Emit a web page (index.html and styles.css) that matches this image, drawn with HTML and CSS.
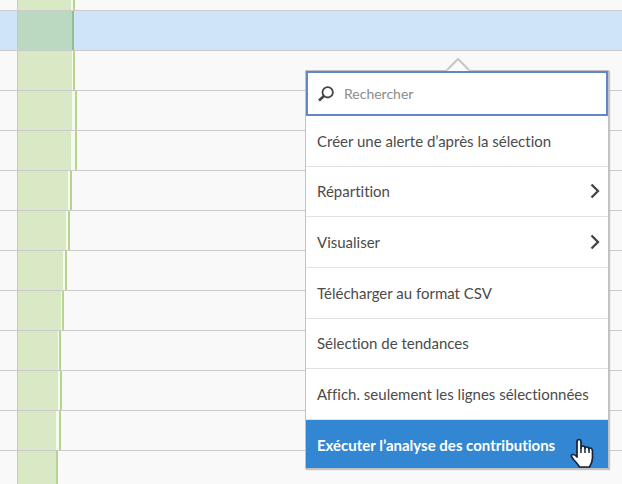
FILE: index.html
```html
<!DOCTYPE html>
<html lang="fr">
<head>
<meta charset="utf-8">
<title>Analyse</title>
<link rel="stylesheet" href="styles.css">
</head>
<body>
<main class="report">
  <div class="row first"><div class="bar" style="--fill:53px;--end:57px"></div></div>
  <div class="row selected"><div class="bar" style="--fill:54px;--end:56px"></div></div>
  <div class="row"><div class="bar" style="--fill:54px;--end:57px"></div></div>
  <div class="row"><div class="bar" style="--fill:54px;--end:59px"></div></div>
  <div class="row"><div class="bar" style="--fill:53px;--end:59px"></div></div>
  <div class="row"><div class="bar" style="--fill:50px;--end:54px"></div></div>
  <div class="row"><div class="bar" style="--fill:48px;--end:52px"></div></div>
  <div class="row"><div class="bar" style="--fill:45px;--end:49px"></div></div>
  <div class="row"><div class="bar" style="--fill:43px;--end:46px"></div></div>
  <div class="row"><div class="bar" style="--fill:40px;--end:43px"></div></div>
  <div class="row"><div class="bar" style="--fill:40px;--end:44px"></div></div>
  <div class="row"><div class="bar" style="--fill:38px;--end:43px"></div></div>
  <div class="row"><div class="bar" style="--fill:38px;--end:40px"></div></div>
</main>
<div class="menu">
  <svg class="caret" viewBox="0 0 24 14" aria-hidden="true"><path d="M1 13L12 2L23 13V14H1Z" fill="#fafafa"/><path d="M1 13L12 2L23 13" fill="none" stroke="#c6c6c6" stroke-width="2"/></svg>
  <label class="search">
    <svg class="lens" viewBox="0 0 16 16" aria-hidden="true"><circle cx="9.700" cy="6.300" r="5.200" fill="none" stroke="#444" stroke-width="1.800"/><path d="M6 10L1 14.500" stroke="#444" stroke-width="2.600"/></svg>
    <input class="query" type="text" placeholder="Rechercher" aria-label="Rechercher">
  </label>
  <div class="items">
    <button class="item">Créer une alerte d’après la sélection</button>
    <button class="item">Répartition<svg class="chevron" viewBox="0 0 10 16" aria-hidden="true"><path d="M1.500 1.500L8 8L1.500 14.500"/></svg></button>
    <button class="item">Visualiser<svg class="chevron" viewBox="0 0 10 16" aria-hidden="true"><path d="M1.500 1.500L8 8L1.500 14.500"/></svg></button>
    <button class="item">Télécharger au format CSV</button>
    <button class="item">Sélection de tendances</button>
    <button class="item">Affich. seulement les lignes sélectionnées</button>
  </div>
  <button class="item active">Exécuter l’analyse des contributions</button>
  <svg class="pointer" viewBox="0 0 24 30" aria-hidden="true"><path d="M7 19V4Q7 1.500 9 1.500T11 4V10Q11 8 13 8T15 10.500Q15 9 17 9T19 11.500Q19 10 20.500 10T22.500 13V20Q22.500 24 19.500 29H9.500Q7 25 3.500 21.500L1.500 18.500Q1 16.500 3 16.500Q5 16.500 7 19Z" fill="#fff" stroke="#17243c" stroke-width="1.700" stroke-linejoin="round"/><path d="M11 10V15M15 10.500V15M19 11.500V15" stroke="#17243c" stroke-width="1.500"/></svg>
</div>
</body>
</html>
```

FILE: styles.css
```css
* { box-sizing: border-box; }
body {
  margin: 0;
  min-height: 100vh;
  position: relative;
  overflow: hidden;
  background: #f9f9f9;
  color: #4b4b4b;
  font-family: Lato, "Liberation Sans", sans-serif;
  font-size: 15px;
  font-variant-ligatures: none;
}
.report {
  height: 100vh;
  overflow: hidden;
}
.row {
  height: 40px;
  padding-left: 17px;
  border-bottom: 1px solid #cbcbcb;
}
.row.first { height: 11px; }
.bar {
  height: 100%;
  border-left: 1px solid #c8c8c8;
  background: linear-gradient(to right,
    #d9e8c5 var(--fill),
    #f6fbee var(--fill) calc(var(--end) - 2px),
    #b5d48d calc(var(--end) - 2px) var(--end),
    transparent var(--end));
}
.selected { background: #cfe4f7; }
.selected .bar {
  background: linear-gradient(to right,
    #bbd8c1 var(--fill),
    #92bf91 var(--fill) var(--end),
    transparent var(--end));
}
.menu {
  position: absolute;
  top: 70px;
  right: 13px;
  width: 304px;
  background: #fff;
  border: 1px solid #c2c2c2;
  box-shadow: 1px 1px 1px #c4c4c4;
}
.caret {
  position: absolute;
  top: -14px;
  left: 140px;
  width: 24px;
  height: 14px;
}
.search {
  display: flex;
  align-items: center;
  gap: 10px;
  height: 45px;
  padding: 0 10px;
  border: 2px solid #6385c9;
}
.lens {
  width: 16px;
  height: 16px;
}
.query {
  flex: 1;
  min-width: 0;
  padding: 0;
  border: 0;
  outline: 0;
  background: none;
  color: inherit;
  font: inherit;
  font-size: 14px;
}
.query::placeholder {
  color: #8c8c8c;
  opacity: 1;
}
.items {
  display: grid;
  grid-auto-rows: 1fr;
  min-height: 304px;
}
.item {
  display: flex;
  align-items: center;
  justify-content: space-between;
  width: 100%;
  padding: 0 8px 0 11px;
  border: 0;
  border-bottom: 1px solid #e2e2e2;
  background: #fff;
  color: inherit;
  font: inherit;
  text-align: left;
  white-space: nowrap;
}
.item.active {
  height: 48px;
  padding-top: 2px;
  border: 0;
  background: #3286d2;
  color: #fff;
  font-weight: 700;
}
.chevron {
  width: 10px;
  height: 16px;
  fill: none;
  stroke: #444;
  stroke-width: 2.300;
}
.pointer {
  position: absolute;
  right: 14px;
  bottom: 0;
  width: 24px;
  height: 30px;
}
```
